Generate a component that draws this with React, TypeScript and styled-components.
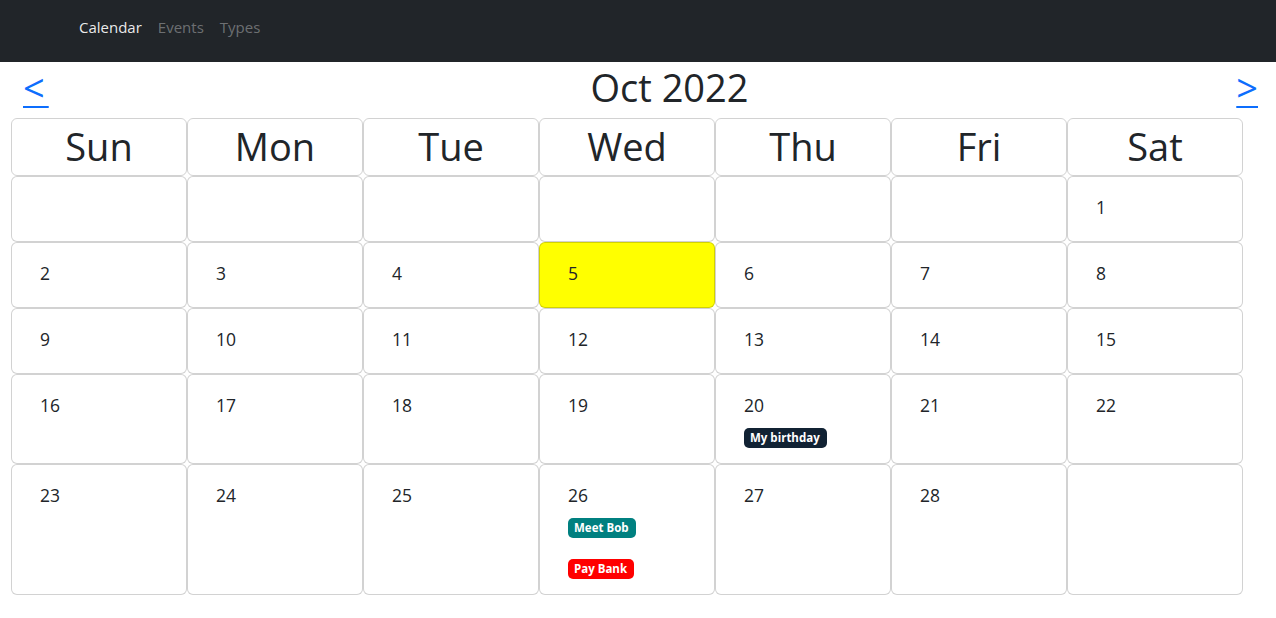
import React from 'react'
import styled, { createGlobalStyle } from 'styled-components'

const GlobalStyle = createGlobalStyle`
  body {
    margin: 0;
    font-family: 'Open Sans', 'Noto Sans', 'Liberation Sans', sans-serif;
    color: #212529;
    background: #fff;
  }
`

type CalEvent = { title: string; color: string }

const events: Record<number, CalEvent[]> = {
  20: [{ title: 'My birthday', color: '#112233' }],
  26: [
    { title: 'Meet Bob', color: 'teal' },
    { title: 'Pay Bank', color: 'red' },
  ],
}

const weekDays = ['Sun', 'Mon', 'Tue', 'Wed', 'Thu', 'Fri', 'Sat']

const weeks: (number | null)[][] = [
  [null, null, null, null, null, null, 1],
  [2, 3, 4, 5, 6, 7, 8],
  [9, 10, 11, 12, 13, 14, 15],
  [16, 17, 18, 19, 20, 21, 22],
  [23, 24, 25, 26, 27, 28, null],
]

const today = 5

const App = () => {
  return (
    <>
      <GlobalStyle />
      <Navbar>
        <NavLink active>Calendar</NavLink>
        <NavLink>Events</NavLink>
        <NavLink>Types</NavLink>
      </Navbar>
      <Main>
        <TitleBar>
          <Arrow href='#'>&lt;</Arrow>
          <Title>Oct 2022</Title>
          <Arrow href='#'>&gt;</Arrow>
        </TitleBar>
        <Grid>
          {weekDays.map((d) => (
            <HeadCell key={d}>{d}</HeadCell>
          ))}
          {weeks.flat().map((day, i) => (
            <DayCell key={i} today={day === today}>
              {day !== null && <DayNumber>{day}</DayNumber>}
              {day !== null && events[day] && (
                <EventList>
                  {events[day].map((ev) => (
                    <Badge key={ev.title} color={ev.color}>
                      {ev.title}
                    </Badge>
                  ))}
                </EventList>
              )}
            </DayCell>
          ))}
        </Grid>
      </Main>
    </>
  )
}

export default App

const Navbar = styled.nav`
  height: 62px;
  box-sizing: border-box;
  background: #212529;
  display: flex;
  align-items: flex-start;
  padding: 16px 0 0 71px;
`

const NavLink = styled.a<{ active?: boolean }>`
  font-size: 15px;
  line-height: 22px;
  padding: 0 8px;
  color: ${(p) => (p.active ? 'rgba(255,255,255,0.92)' : 'rgba(255,255,255,0.35)')};
  cursor: pointer;
`

const Main = styled.main`
  padding: 0 0 24px 11px;
`

const TitleBar = styled.div`
  display: flex;
  align-items: baseline;
  height: 56px;
  box-sizing: border-box;
  padding: 2px 18px 0 12px;
`

const Arrow = styled.a`
  font-size: 38px;
  line-height: 46px;
  color: #0d6efd;
  text-decoration: underline;
  text-underline-offset: 4px;
  text-decoration-thickness: 2px;
  letter-spacing: 4px;
  &:last-child {
    letter-spacing: 0;
    padding-left: 4px;
  }
`

const Title = styled.h1`
  flex: 1;
  margin: 0;
  padding-left: 58px;
  text-align: center;
  font-size: 38px;
  line-height: 46px;
  font-weight: 400;
`

const Grid = styled.div`
  display: grid;
  grid-template-columns: repeat(7, 176px);
`

const HeadCell = styled.div`
  border: 1px solid rgba(0, 0, 0, 0.175);
  border-radius: 6px;
  height: 58px;
  box-sizing: border-box;
  display: flex;
  align-items: center;
  justify-content: center;
  font-size: 38px;
  padding-bottom: 2px;
`

const DayCell = styled.div<{ today?: boolean }>`
  border: 1px solid rgba(0, 0, 0, 0.175);
  border-radius: 6px;
  background: ${(p) => (p.today ? '#ffff00' : '#fff')};
  padding: 17px 28px 15px 28px;
  min-height: 66px;
  box-sizing: border-box;
  display: flex;
  flex-direction: column;
  align-items: flex-start;
`

const DayNumber = styled.div`
  font-size: 17.5px;
  line-height: 27px;
  margin-bottom: 5px;
`

const EventList = styled.div`
  display: flex;
  flex-direction: column;
  align-items: flex-start;
  gap: 21px;
  padding-top: 4px;
`

const Badge = styled.span<{ color: string }>`
  background: ${(p) => p.color};
  color: #fff;
  font-size: 11.5px;
  font-weight: 700;
  line-height: 12px;
  padding: 4px 7px 4px 6px;
  border-radius: 5px;
`
